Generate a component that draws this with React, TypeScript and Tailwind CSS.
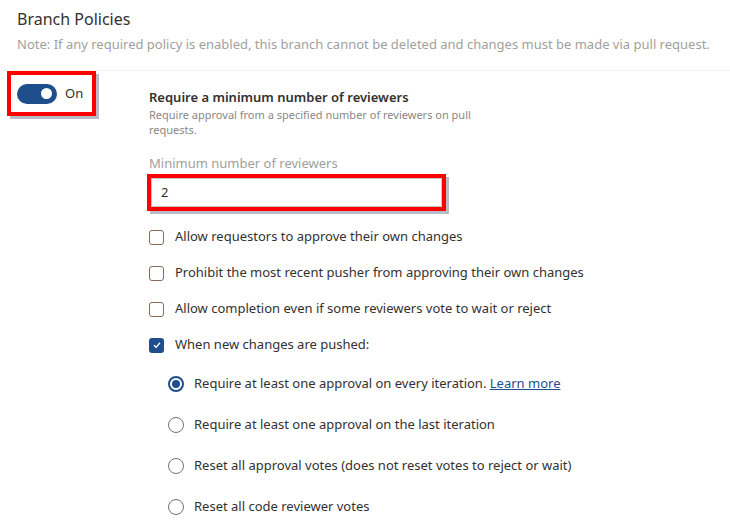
import React from "react";

const font = { fontFamily: '"Segoe UI", "Noto Sans", "Open Sans", sans-serif' };

function Checkbox({ checked, label }: { checked?: boolean; label: string }) {
  return (
    <div className="flex items-center h-[20px]">
      {checked ? (
        <div className="w-[15px] h-[15px] rounded-[3px] bg-[#1f4e8c] flex items-center justify-center">
          <svg width="10" height="10" viewBox="0 0 10 10">
            <path d="M2 5.2 L4.1 7.2 L8 2.8" stroke="white" strokeWidth="1.3" fill="none" />
          </svg>
        </div>
      ) : (
        <div className="w-[15px] h-[15px] rounded-[3px] border border-[#8a6a5a]" />
      )}
      <span className="ml-[11px] text-[13px] text-[#323130]">{label}</span>
    </div>
  );
}

function Radio({ checked, children }: { checked?: boolean; children: React.ReactNode }) {
  return (
    <div className="flex items-center h-[20px]">
      {checked ? (
        <div className="w-[16px] h-[16px] rounded-full border-[2px] border-[#1f4e8c] flex items-center justify-center">
          <div className="w-[8px] h-[8px] rounded-full bg-[#1f4e8c]" />
        </div>
      ) : (
        <div className="w-[16px] h-[16px] rounded-full border border-[#7a6f6a]" />
      )}
      <span className="ml-[10px] text-[13px] text-[#323130]">{children}</span>
    </div>
  );
}

export default function App() {
  return (
    <div className="w-[730px] h-[531px] bg-white overflow-hidden" style={font}>
      <div className="px-[17px] pt-[7px]">
        <div className="text-[16px] text-[#323130] leading-[24px]">Branch Policies</div>
        <div className="text-[13px] text-[#a19f9d] leading-[20px] mt-[3px] whitespace-nowrap">
          Note: If any required policy is enabled, this branch cannot be deleted and changes must be made via pull request.
        </div>
      </div>
      <div className="mt-[16px] border-t border-[#f3f2f1]" />
      <div className="flex">
        <div className="w-[147px] pl-[7px] pt-[0px]">
          <div className="w-[89px] h-[45px] border-[4px] border-[#ff0000] bg-white shadow-[3px_3px_0_#b9bcc6]">
            <div className="flex items-center h-full pl-[6px]">
              <div className="w-[40px] h-[20px] rounded-full bg-[#1f4e8c] flex items-center justify-end pr-[5px]">
                <div className="w-[11px] h-[11px] rounded-full bg-white" />
              </div>
              <span className="ml-[8px] text-[13px] text-[#323130]">On</span>
            </div>
          </div>
        </div>
        <div className="flex-1 pt-[17px]">
          <div className="pl-[2px]">
            <div className="text-[13px] font-semibold text-[#323130] leading-[18px]">
              Require a minimum number of reviewers
            </div>
            <div className="text-[11px] text-[#8a8886] leading-[15px] w-[340px] mt-[1px]">
              Require approval from a specified number of reviewers on pull requests.
            </div>
            <div className="text-[13px] text-[#a19f9d] leading-[18px] mt-[17px]">
              Minimum number of reviewers
            </div>
          </div>
          <div className="mt-[2px] w-[299px] h-[37px] border-[4px] border-[#ff0000] bg-white shadow-[3px_3px_0_#b9bcc6]">
            <div className="h-full border border-[#c8c6c4] flex items-center pl-[9px] text-[13px] text-[#323130]">
              2
            </div>
          </div>
          <div className="pl-[2px] mt-[16px] flex flex-col gap-[16px]">
            <Checkbox label="Allow requestors to approve their own changes" />
            <Checkbox label="Prohibit the most recent pusher from approving their own changes" />
            <Checkbox label="Allow completion even if some reviewers vote to wait or reject" />
            <Checkbox checked label="When new changes are pushed:" />
          </div>
          <div className="pl-[21px] mt-[19px] flex flex-col gap-[21px]">
            <Radio checked>
              Require at least one approval on every iteration.{" "}
              <span className="text-[#1f4e8c] underline">Learn more</span>
            </Radio>
            <Radio>Require at least one approval on the last iteration</Radio>
            <Radio>Reset all approval votes (does not reset votes to reject or wait)</Radio>
            <Radio>Reset all code reviewer votes</Radio>
          </div>
        </div>
      </div>
    </div>
  );
}
